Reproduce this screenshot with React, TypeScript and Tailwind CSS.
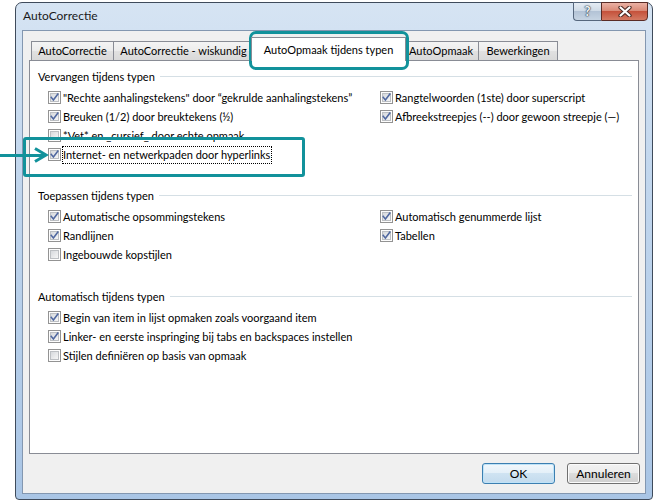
import React from "react";

function Check({ checked }: { checked: boolean }) {
  return (
    <svg width="13" height="13" viewBox="0 0 13 13" className="shrink-0 block">
      <defs>
        <linearGradient id="cbg" x1="0" y1="0" x2="1" y2="1">
          <stop offset="0" stopColor="#d4d7db" />
          <stop offset="1" stopColor="#f8f8f8" />
        </linearGradient>
      </defs>
      <rect x="0.5" y="0.5" width="12" height="12" fill="#fdfdfd" stroke="#939393" />
      <rect x="2.5" y="2.5" width="8" height="8" fill="url(#cbg)" stroke="#bcbfc3" />
      {checked && (
        <path d="M3.3 6.4 L5.4 8.9 L9.8 3.2" fill="none" stroke="#5068a0" strokeWidth="1.6" strokeLinecap="square" />
      )}
    </svg>
  );
}

function Row({ label, checked, focus }: { label: string; checked: boolean; focus?: boolean }) {
  return (
    <div className="flex h-[19px] items-center">
      <Check checked={checked} />
      {focus ? (
        <span className="ml-[1px] flex h-[18px] items-center border border-dotted border-black pr-[1px] leading-[16px] whitespace-nowrap">
          {label}
        </span>
      ) : (
        <span className="ml-[2px] leading-[16px] whitespace-nowrap">{label}</span>
      )}
    </div>
  );
}

type Item = { label: string; checked: boolean; focus?: boolean };

function Section({ title, left, right, className }: { title: string; left: Item[]; right: Item[]; className?: string }) {
  return (
    <div className={className}>
      <div className="flex h-[19px] items-center">
        <span className="leading-[16px] whitespace-nowrap">{title}</span>
        <div className="ml-[5px] h-px flex-1 bg-[#d5dfe5]" />
      </div>
      <div className="mt-[2px] flex pl-[10px]">
        <div className="w-[332px]">
          {left.map((it) => (
            <Row key={it.label} {...it} />
          ))}
        </div>
        <div>
          {right.map((it) => (
            <Row key={it.label} {...it} />
          ))}
        </div>
      </div>
    </div>
  );
}

function Tab({ label, w, cls }: { label: string; w: string; cls: string }) {
  return (
    <div
      className={`flex h-[19px] items-center justify-center border border-b-0 border-[#898c95] bg-[linear-gradient(180deg,#f4f4f4_0%,#ececec_50%,#e1e1e1_50%,#d9d9d9_100%)] whitespace-nowrap leading-[16px] ${w} ${cls}`}
    >
      {label}
    </div>
  );
}

export default function App() {
  return (
    <div className="relative h-[502px] w-[656px] overflow-hidden bg-white font-['Lato','Noto_Sans',sans-serif] text-[11px] text-black">
      <div className="pl-[15px] pt-[2px]">
        {/* Window */}
        <div className="flex h-[498px] w-[638px] flex-col rounded-t-[7px] rounded-b-[4px] border border-[#3f4b5b] bg-[linear-gradient(180deg,#d6e4f3_0%,#c4d8ee_30%,#b4cde9_70%,#a9c5e5_100%)]">
          {/* Title bar */}
          <div className="flex h-[27px] items-start justify-between">
            <div className="pl-[7px] pt-[5px] text-[12px] leading-[16px] text-[#1a1a1a]">AutoCorrectie</div>
            <div className="-mt-px mr-[4px] flex">
              <div className="flex h-[19px] w-[28px] items-center justify-center rounded-bl-[4px] border border-r-0 border-[#56677d] bg-[linear-gradient(180deg,#e5ecf4_0%,#d0dbe7_45%,#b3c3d6_50%,#c6d4e3_100%)]">
                <span className="text-[13px] font-bold leading-none text-[#f4f6f8] [text-shadow:0_0_1px_#33404f,0_0_1px_#33404f,0_0_2px_#33404f]">?</span>
              </div>
              <div className="flex h-[19px] w-[47px] items-center justify-center rounded-br-[4px] border border-[#5a2c26] bg-[linear-gradient(180deg,#eab1a4_0%,#d98a77_45%,#c5523c_50%,#d37a63_100%)]">
                <svg width="14" height="11" viewBox="0 0 14 11">
                  <path d="M2.5 1.5 L11.5 9.5 M11.5 1.5 L2.5 9.5" stroke="#4a2a24" strokeWidth="4.2" strokeLinecap="round" />
                  <path d="M2.5 1.5 L11.5 9.5 M11.5 1.5 L2.5 9.5" stroke="#ffffff" strokeWidth="2.2" strokeLinecap="round" />
                </svg>
              </div>
            </div>
          </div>
          {/* Client area */}
          <div className="mx-[6px] flex h-[464px] flex-col border border-[#8397b0] bg-[#f0f0f0] px-[6px] pt-[6px]">
            {/* tabs */}
            <div className="flex h-[23px] items-end pl-[2px]">
              <Tab label="AutoCorrectie" w="w-[83px]" cls="" />
              <Tab label="AutoCorrectie - wiskundig" w="w-[141px]" cls="-ml-px" />
              <div className="relative z-10 -mb-px ml-[-3px] flex h-[24px] w-[155px] items-start justify-center border border-b-0 border-[#898c95] bg-white pt-[4px] leading-[16px] whitespace-nowrap">
                AutoOpmaak tijdens typen
              </div>
              <Tab label="AutoOpmaak" w="w-[76px]" cls="ml-[-3px]" />
              <Tab label="Bewerkingen" w="w-[80px]" cls="-ml-px" />
            </div>
            {/* panel */}
            <div className="h-[394px] border border-[#898c95] bg-white pl-[8px] pr-[6px] pt-[6px]">
              <Section
                title="Vervangen tijdens typen"
                left={[
                  { label: "\"Rechte aanhalingstekens\" door \u201Cgekrulde aanhalingstekens\u201D", checked: true },
                  { label: "Breuken (1/2) door breuktekens (\u00BD)", checked: true },
                  { label: "*Vet* en _cursief_ door echte opmaak", checked: false },
                  { label: "Internet- en netwerkpaden door hyperlinks", checked: true, focus: true },
                ]}
                right={[
                  { label: "Rangtelwoorden (1ste) door superscript", checked: true },
                  { label: "Afbreekstreepjes (--) door gewoon streepje (\u2014)", checked: true },
                ]}
              />
              <Section
                className="mt-[22px]"
                title="Toepassen tijdens typen"
                left={[
                  { label: "Automatische opsommingstekens", checked: true },
                  { label: "Randlijnen", checked: true },
                  { label: "Ingebouwde kopstijlen", checked: false },
                ]}
                right={[
                  { label: "Automatisch genummerde lijst", checked: true },
                  { label: "Tabellen", checked: true },
                ]}
              />
              <Section
                className="mt-[23px]"
                title="Automatisch tijdens typen"
                left={[
                  { label: "Begin van item in lijst opmaken zoals voorgaand item", checked: true },
                  { label: "Linker- en eerste inspringing bij tabs en backspaces instellen", checked: true },
                  { label: "Stijlen defini\u00EBren op basis van opmaak", checked: false },
                ]}
                right={[]}
              />
            </div>
            {/* buttons */}
            <div className="-mr-px mt-[9px] flex justify-end gap-[12px]">
              <button className="flex h-[21px] w-[73px] items-center justify-center rounded-[3px] border border-[#3c7fb1] bg-[linear-gradient(180deg,#f2f8fc_0%,#e3eff8_50%,#cfe3f2_50%,#c3dbee_100%)] text-[12px] leading-[16px] shadow-[inset_0_0_0_1px_#bfe3f8]">
                OK
              </button>
              <button className="flex h-[21px] w-[73px] items-center justify-center rounded-[3px] border border-[#707070] bg-[linear-gradient(180deg,#f2f2f2_0%,#ebebeb_50%,#dddddd_50%,#cfcfcf_100%)] text-[12px] leading-[16px] shadow-[inset_0_0_0_1px_#fbfbfb]">
                Annuleren
              </button>
            </div>
          </div>
        </div>
      </div>

      {/* annotations */}
      <div className="absolute left-[249px] top-[31px] h-[39px] w-[160px] rounded-[7px] border-[3px] border-[#12929b]" />
      <div className="absolute left-[23px] top-[137px] h-[40px] w-[282px] rounded-[3px] border-[3px] border-[#12929b]" />
      <svg className="absolute left-0 top-[145px]" width="50" height="20" viewBox="0 0 50 20">
        <path d="M0 10.5 L44 10.5" stroke="#12929b" strokeWidth="3" />
        <path d="M35 3.5 L46 10 L35 16.5" fill="none" stroke="#12929b" strokeWidth="3" strokeLinejoin="miter" />
      </svg>
    </div>
  );
}
